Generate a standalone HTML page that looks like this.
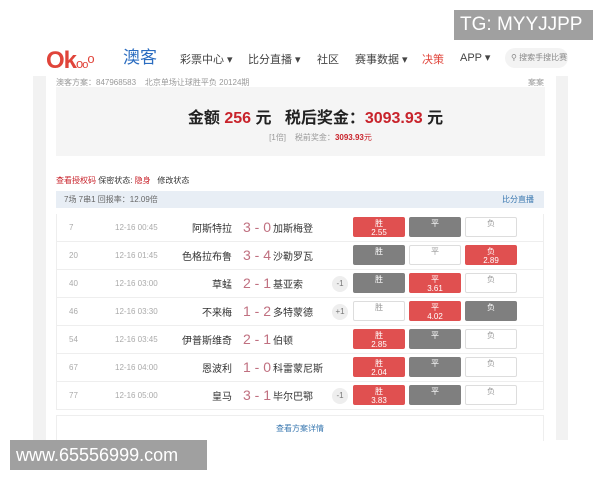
<!DOCTYPE html>
<html><head><meta charset="utf-8"><style>
*{margin:0;padding:0;box-sizing:border-box}
body{width:600px;height:480px;background:#fff;position:relative;overflow:hidden;font-family:"Liberation Sans","Noto Sans CJK SC",sans-serif;color:#333}
.abs{position:absolute}
.tg{left:454px;top:10px;width:139px;height:30px;background:#a0a0a0;color:#fff;font-size:19px;line-height:30px;padding-left:6px}
.wm{left:10px;top:440px;width:197px;height:30px;background:#a0a0a0;color:#fff;font-size:18px;line-height:30px;padding-left:6px}
.nav{left:33px;top:40px;width:535px;height:36px;background:#fff}
.logo{left:46px;top:45px;font-size:24px;font-weight:bold;color:#e0443a;letter-spacing:-1px;line-height:28px}
.logo2{left:123px;top:48px;font-size:17px;color:#2a6cc0;line-height:20px}
.ni{top:51px;font-size:11px;color:#444}
.search{left:505px;top:48px;width:63px;height:20px;background:#f3f3f3;border-radius:10px;font-size:8px;color:#888;line-height:20px;padding-left:6px;white-space:nowrap;overflow:hidden}
.gray{left:33px;top:76px;width:535px;height:364px;background:#f2f2f2}
.panel{left:46px;top:76px;width:510px;height:364px;background:#fff}
.sum{left:56px;top:87px;width:489px;height:69px;background:#f5f5f5}
.red{color:#c8232b}
.hdr{left:56px;top:191px;width:488px;height:17px;background:#e8eef5;font-size:8px;color:#666;line-height:17px;padding-left:8px}
.row{left:56px;width:488px;height:28px;border:1px solid #eee;border-top:none;font-size:8px;color:#aaa}
.row span{position:absolute;top:9px;line-height:10px}
.row span.t{font-size:10px;color:#333;top:11px;line-height:10px}
.row span.sc{font-size:14px;color:#c07080;top:6px;line-height:14px}
.b{position:absolute;top:3px;width:52px;height:20px;border:1px solid #ddd;border-radius:2px;font-size:8px;text-align:center;line-height:9px;padding-top:1px;background:#fff;color:#999}
.R{background:#e05050;border-color:#e05050;color:#fff}
.G{background:#7f7f7f;border-color:#7f7f7f;color:#fff}
.hc{position:absolute;left:275px;top:6px;width:16px;height:16px;border-radius:8px;background:#eee;font-size:8px;color:#777;text-align:center;line-height:16px}
</style></head><body>
<div class="abs tg">TG: MYYJJPP</div>
<div class="abs nav"></div>
<div class="abs logo">Ok<span style="font-size:13px;font-weight:normal">o</span><span style="font-size:11px;font-weight:normal">o</span><span style="font-size:13px;font-weight:normal;vertical-align:5px">o</span></div>
<div class="abs logo2">澳客</div>
<div class="abs ni" style="left:180px">彩票中心 ▾</div>
<div class="abs ni" style="left:248px">比分直播 ▾</div>
<div class="abs ni" style="left:317px">社区</div>
<div class="abs ni" style="left:355px">赛事数据 ▾</div>
<div class="abs ni" style="left:422px;color:#e0443a">决策</div>
<div class="abs ni" style="left:460px">APP ▾</div>
<div class="abs search">⚲ 搜索手搜比赛</div>
<div class="abs gray"></div>
<div class="abs panel"></div>
<div class="abs" style="left:56px;top:77px;font-size:8px;color:#999">澳客方案：847968583 &nbsp;&nbsp; 北京单场让球胜平负 20124期</div>
<div class="abs" style="left:528px;top:77px;font-size:8px;color:#999">案案</div>
<div class="abs sum"></div>
<div class="abs" style="left:71px;top:104px;width:489px;text-align:center;font-size:16px;font-weight:bold;color:#222">金额 <span class="red">256</span> 元 &nbsp; 税后奖金：<span class="red">3093.93</span> 元</div>
<div class="abs" style="left:76px;top:132px;width:489px;text-align:center;font-size:8px;color:#999">[1倍] &nbsp;&nbsp; 税前奖金：<b class="red">3093.93</b><span class="red">元</span></div>
<div class="abs" style="left:56px;top:175px;font-size:8px;color:#333"><span class="red">查看授权码</span> 保密状态: <span class="red">隐身</span> &nbsp; 修改状态</div>
<div class="abs hdr">7场 7串1 回报率：12.09倍<span style="position:absolute;right:10px;color:#3a78b0">比分直播</span></div>

<div class="abs row" style="top:214px"><span style="left:12px">7</span><span style="left:58px">12-16 00:45</span><span class="t" style="right:311px">阿斯特拉</span><span class="sc" style="left:186px">3 - 0</span><span class="t" style="left:216px">加斯梅登</span>
<div class="b R" style="left:296px">胜<br>2.55</div><div class="b G" style="left:352px">平</div><div class="b" style="left:408px">负</div></div>
<div class="abs row" style="top:242px"><span style="left:12px">20</span><span style="left:58px">12-16 01:45</span><span class="t" style="right:311px">色格拉布鲁</span><span class="sc" style="left:186px">3 - 4</span><span class="t" style="left:216px">沙勒罗瓦</span>
<div class="b G" style="left:296px">胜</div><div class="b" style="left:352px">平</div><div class="b R" style="left:408px">负<br>2.89</div></div>
<div class="abs row" style="top:270px"><span style="left:12px">40</span><span style="left:58px">12-16 03:00</span><span class="t" style="right:311px">草蜢</span><span class="sc" style="left:186px">2 - 1</span><span class="t" style="left:216px">基亚索</span><div class="hc">-1</div>
<div class="b G" style="left:296px">胜</div><div class="b R" style="left:352px">平<br>3.61</div><div class="b" style="left:408px">负</div></div>
<div class="abs row" style="top:298px"><span style="left:12px">46</span><span style="left:58px">12-16 03:30</span><span class="t" style="right:311px">不来梅</span><span class="sc" style="left:186px">1 - 2</span><span class="t" style="left:216px">多特蒙德</span><div class="hc">+1</div>
<div class="b" style="left:296px">胜</div><div class="b R" style="left:352px">平<br>4.02</div><div class="b G" style="left:408px">负</div></div>
<div class="abs row" style="top:326px"><span style="left:12px">54</span><span style="left:58px">12-16 03:45</span><span class="t" style="right:311px">伊普斯维奇</span><span class="sc" style="left:186px">2 - 1</span><span class="t" style="left:216px">伯顿</span>
<div class="b R" style="left:296px">胜<br>2.85</div><div class="b G" style="left:352px">平</div><div class="b" style="left:408px">负</div></div>
<div class="abs row" style="top:354px"><span style="left:12px">67</span><span style="left:58px">12-16 04:00</span><span class="t" style="right:311px">恩波利</span><span class="sc" style="left:186px">1 - 0</span><span class="t" style="left:216px">科雷蒙尼斯</span>
<div class="b R" style="left:296px">胜<br>2.04</div><div class="b G" style="left:352px">平</div><div class="b" style="left:408px">负</div></div>
<div class="abs row" style="top:382px"><span style="left:12px">77</span><span style="left:58px">12-16 05:00</span><span class="t" style="right:311px">皇马</span><span class="sc" style="left:186px">3 - 1</span><span class="t" style="left:216px">毕尔巴鄂</span><div class="hc">-1</div>
<div class="b R" style="left:296px">胜<br>3.83</div><div class="b G" style="left:352px">平</div><div class="b" style="left:408px">负</div></div>

<div class="abs" style="left:56px;top:415px;width:488px;height:26px;border:1px solid #eee;border-bottom:none;text-align:center;font-size:8px;color:#3a78b0;line-height:26px">查看方案详情</div>
<div class="abs wm">www.65556999.com</div>
</body></html>
